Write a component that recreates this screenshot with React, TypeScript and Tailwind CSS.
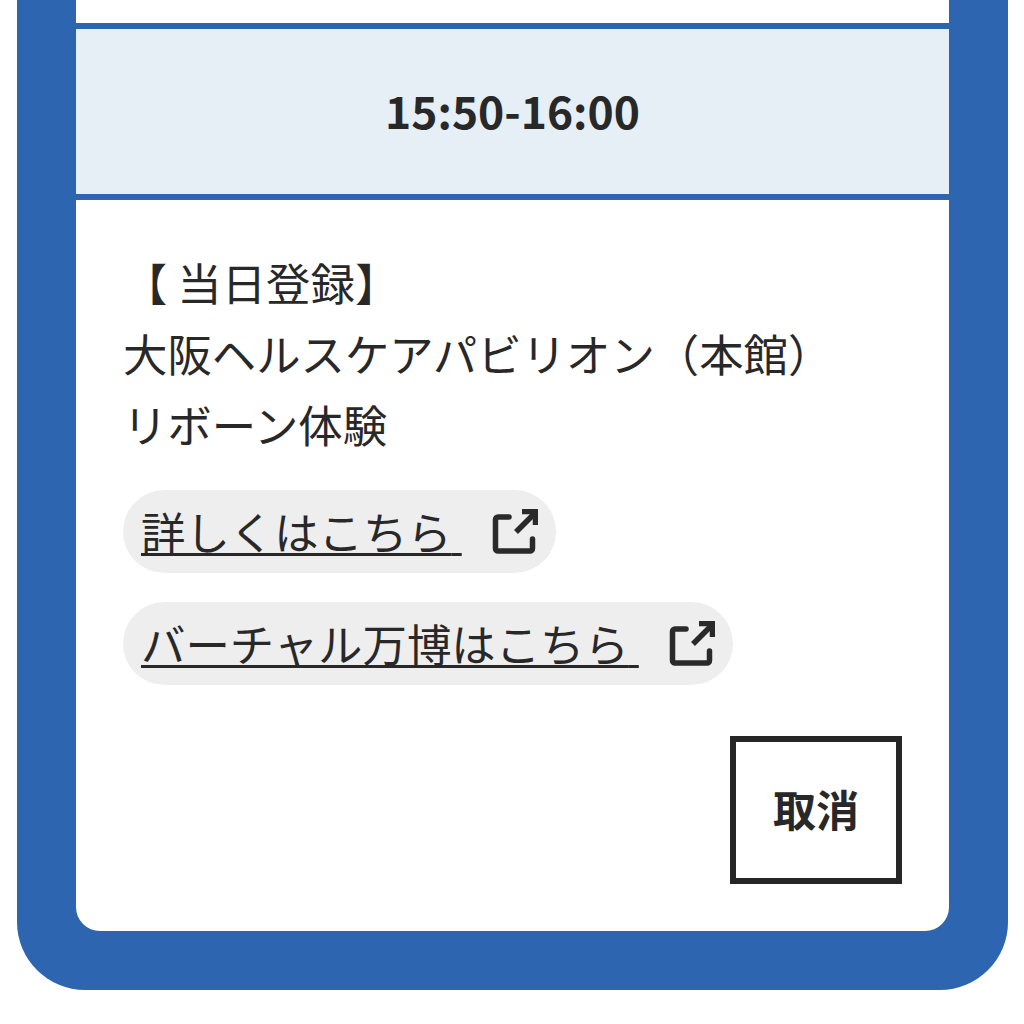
import React from 'react';

const ExternalIcon = () => (
  <svg viewBox="0 0 46 46" className="w-[46px] h-[46px] shrink-0" fill="none" stroke="#2a2a2a" strokeWidth="5.500">
    <path d="M17 8H6a2.500 2.500 0 0 0-2.500 2.500V39.500a2.500 2.500 0 0 0 2.500 2.500H38a2.500 2.500 0 0 0 2.500-2.500V30" strokeLinecap="round" />
    <path d="M24 23L43 4" />
    <path d="M30 2.500H43.500V16" />
  </svg>
);

const LinkPill = ({ label }: { label: string }) => (
  <a className="inline-flex items-center self-start h-[83px] rounded-[42px] bg-[#eeeeee] pl-[18px] pr-[18px] gap-[30px]">
    <span className="underline decoration-[3px] underline-offset-[3px] whitespace-pre">{label} </span>
    <ExternalIcon />
  </a>
);

export default function App() {
  return (
    <div className="h-screen overflow-hidden bg-white pl-[17px] pr-[16px] text-[#282828] font-['Noto_Sans_CJK_JP','Noto_Sans',sans-serif] text-[44.4px]">
      <div className="h-[990px] rounded-b-[68px] px-[59px] pb-[59px] bg-[#2d65b0]">
        <div className="h-full flex flex-col bg-white rounded-b-[24px]">
          <div className="h-[23px]" />
          <div className="h-[177px] pb-[2px] flex items-center justify-center border-y-[6px] border-[#2d65b0] bg-[#e6eef6] font-bold leading-none">
            15:50-16:00
          </div>
          <div className="flex-1 flex flex-col pl-[47px] pr-[47px] pt-[46px]">
            <p className="leading-[71px]">【 当日登録】</p>
            <p className="leading-[71px]">大阪ヘルスケアパビリオン（本館）</p>
            <p className="leading-[71px]">リボーン体験</p>
            <div className="flex flex-col gap-[29px] mt-[31px]">
              <LinkPill label="詳しくはこちら" />
              <LinkPill label="バーチャル万博はこちら" />
            </div>
            <button className="self-end mt-[51px] w-[172px] h-[148px] pb-[3px] border-[6px] border-[#262626] font-bold text-[43px]">
              取消
            </button>
          </div>
        </div>
      </div>
    </div>
  );
}
